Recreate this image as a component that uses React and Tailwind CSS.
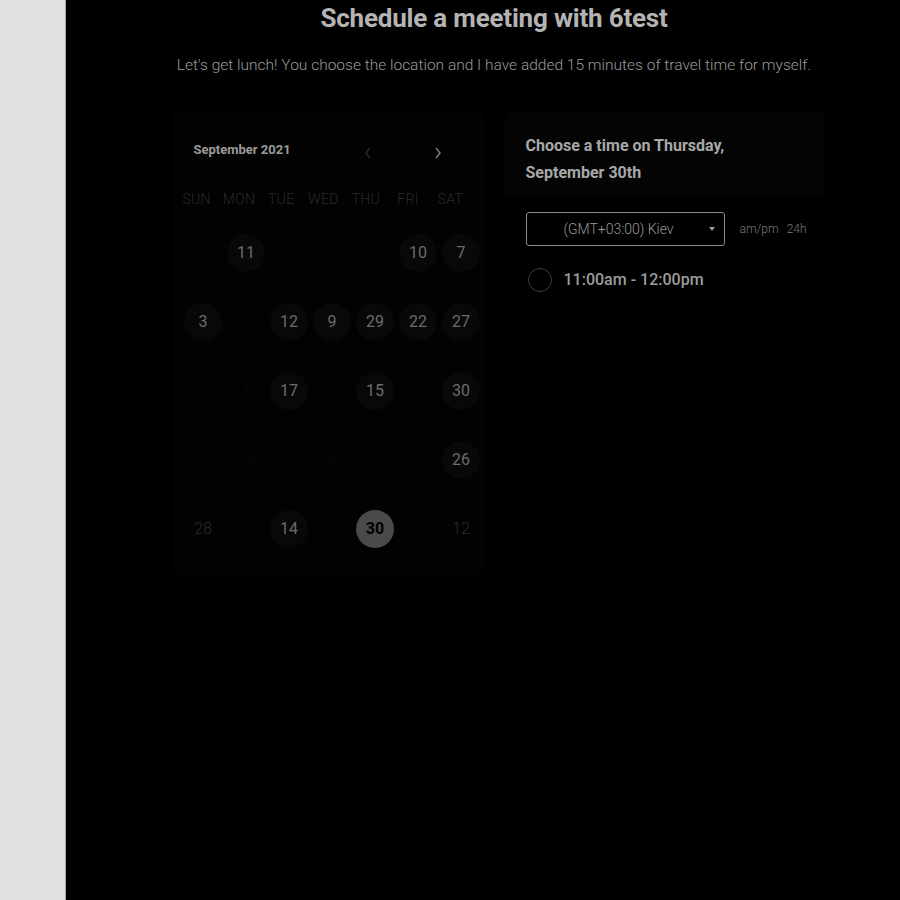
import React from "react";

const HEADERS = ["SUN", "MON", "TUE", "WED", "THU", "FRI", "SAT"];

// kind: "on" = available (circle), "dim" = plain faint, "off" = barely visible
const ROWS = [
  [["1", "off"], ["11", "on"], ["1", "off"], ["-", "off"], ["2", "off"], ["10", "on"], ["7", "on"]],
  [["3", "on"], ["1", "off"], ["12", "on"], ["9", "on"], ["29", "on"], ["22", "on"], ["27", "on"]],
  [["1", "off"], ["4", "off"], ["17", "on"], ["2", "off"], ["15", "on"], ["1", "off"], ["30", "on"]],
  [["1", "off"], ["24", "off"], ["1", "off"], ["8", "off"], ["5", "off"], ["13", "off"], ["26", "on"]],
  [["28", "dim"], ["4", "off"], ["14", "on"], ["6", "off"], ["30", "sel"], ["1", "off"], ["12", "dim"]],
];

const DayCell = ({ label, kind }) => {
  if (kind === "sel") {
    return (
      <div className="flex h-[69px] items-center justify-center">
        <div className="flex h-[38px] w-[38px] items-center justify-center rounded-full bg-[#4a4a4a] text-[16px] font-bold text-black">
          {label}
        </div>
      </div>
    );
  }
  if (kind === "on") {
    return (
      <div className="flex h-[69px] items-center justify-center">
        <div className="flex h-[38px] w-[38px] items-center justify-center rounded-full bg-[#080808] text-[16px] font-normal text-[#6c6c6c]">
          {label}
        </div>
      </div>
    );
  }
  return (
    <div
      className={
        kind === "dim"
          ? "flex h-[69px] items-center justify-center text-[16px] font-light text-[#2c2c2c]"
          : "flex h-[69px] items-center justify-center text-[16px] font-light text-[#080808]"
      }
    >
      {label}
    </div>
  );
};

const Calendar = () => (
  <div className="w-[313px] rounded-sm bg-[#020202] pb-[12px] pt-[26px]">
    <div className="flex items-center pl-[22px]">
      <span className="text-[13px] font-bold text-[#9a9a9a]">September 2021</span>
      <svg className="ml-[72px] mt-[8px]" width="10" height="14" viewBox="0 0 10 14" fill="none">
        <path d="M7 2 L3 7 L7 12" stroke="#2a2a2a" strokeWidth="1.5" />
      </svg>
      <svg className="ml-[60px] mt-[8px]" width="10" height="14" viewBox="0 0 10 14" fill="none">
        <path d="M3 2 L7 7 L3 12" stroke="#7a7a7a" strokeWidth="1.5" />
      </svg>
    </div>
    <div className="ml-[4px] mt-[29px] grid w-[296px] grid-cols-7">
      {HEADERS.map((h) => (
        <div key={h} className="text-center text-[14px] font-light tracking-wide text-[#2a2a2a]">
          {h}
        </div>
      ))}
    </div>
    <div className="ml-[10px] mt-[8px] grid w-[301px] grid-cols-7">
      {ROWS.flat().map(([label, kind], i) => (
        <DayCell key={i} label={label} kind={kind} />
      ))}
    </div>
  </div>
);

const TimePanel = () => (
  <div className="w-[320px]">
    <div className="rounded-sm bg-[#040404] px-[21px] pb-[12px] pt-[20px] text-[16px] font-bold leading-[27px] text-[#a8a8a8]">
      Choose a time on Thursday,
      <br />
      September 30th
    </div>
    <div className="mt-[14px] flex items-center pl-[21px]">
      <div className="relative flex h-[34px] w-[199px] items-center rounded-[3px] border border-[#8a8a8a] pl-[37px] text-[14px] font-light text-[#9a9a9a]">
        (GMT+03:00) Kiev
        <span className="absolute right-[9px] top-[14px] h-0 w-0 border-x-[3px] border-t-[4px] border-x-transparent border-t-[#9a9a9a]" />
      </div>
      <span className="ml-[15px] text-[12px] font-light text-[#7a7a7a]">am/pm</span>
      <span className="ml-[8px] text-[12px] font-light text-[#7a7a7a]">24h</span>
    </div>
    <div className="mt-[22px] flex items-center pl-[23px]">
      <span className="h-[24px] w-[24px] rounded-full border border-[#3c3c3c]" />
      <span className="ml-[12px] text-[16px] font-medium text-[#9c9c9c]">11:00am - 12:00pm</span>
    </div>
  </div>
);

export default function App() {
  return (
    <div className="flex h-[900px] w-[900px] bg-black" style={{ fontFamily: "Roboto, 'Liberation Sans', sans-serif" }}>
      <div className="w-[66px] shrink-0 border-r border-[#a8a8a8] bg-[#e0e0e0]" />
      <main className="flex flex-1 flex-col items-center pl-[22px]">
        <h1 className="mt-[1px] text-[26px] font-bold leading-[34px] tracking-[-0.2px] text-[#b4b4b4]">
          Schedule a meeting with 6test
        </h1>
        <p className="mt-[19px] text-[15.5px] font-light text-[#9a9a9a]">
          Let's get lunch! You choose the location and I have added 15 minutes of travel time for myself.
        </p>
        <div className="ml-[8px] mt-[35px] flex gap-[20px]">
          <Calendar />
          <TimePanel />
        </div>
      </main>
    </div>
  );
}
